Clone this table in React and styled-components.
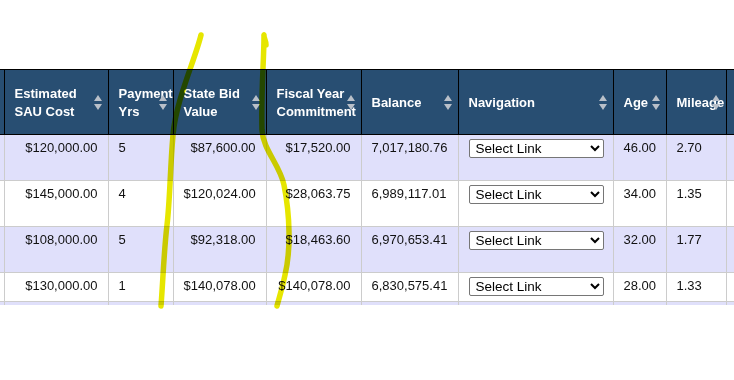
import React from "react";
import styled, { createGlobalStyle } from "styled-components";

const rows = [
  { h: 46, cost: "$120,000.00", yrs: "5", bid: "$87,600.00", fy: "$17,520.00", bal: "7,017,180.76", age: "46.00", mi: "2.70" },
  { h: 46, cost: "$145,000.00", yrs: "4", bid: "$120,024.00", fy: "$28,063.75", bal: "6,989,117.01", age: "34.00", mi: "1.35" },
  { h: 46, cost: "$108,000.00", yrs: "5", bid: "$92,318.00", fy: "$18,463.60", bal: "6,970,653.41", age: "32.00", mi: "1.77" },
  { h: 28, cost: "$130,000.00", yrs: "1", bid: "$140,078.00", fy: "$140,078.00", bal: "6,830,575.41", age: "28.00", mi: "1.33" },
  { h: 46, cost: "", yrs: "", bid: "", fy: "", bal: "", age: "", mi: "" },
];

const columns = [
  { w: 4, label: null },
  { w: 104, label: ["Estimated", "SAU Cost"] },
  { w: 65, label: ["Payment", "Yrs"] },
  { w: 93, label: ["State Bid", "Value"] },
  { w: 95, label: ["Fiscal Year", "Commitment"] },
  { w: 97, label: ["Balance"] },
  { w: 155, label: ["Navigation"] },
  { w: 53, label: ["Age"] },
  { w: 60, label: ["Mileage"] },
  { w: 90, label: [""] },
];

function SortIcon() {
  return (
    <Sort viewBox="0 0 8 15" aria-hidden="true">
      <path d="M4 0 L8 6 L0 6 Z" />
      <path d="M0 9 L8 9 L4 15 Z" />
    </Sort>
  );
}

function LinkSelect() {
  return (
    <Select defaultValue="">
      <option value="">Select Link</option>
      <option value="map">Map</option>
      <option value="detail">Detail</option>
    </Select>
  );
}

function App() {
  return (
    <>
      <GlobalStyle />
      <Page>
        <Viewport>
          <Table>
            <colgroup>
              {columns.map((c, i) => (
                <col key={i} style={{ width: c.w }} />
              ))}
            </colgroup>
            <thead>
              <tr>
                {columns.map((c, i) => (
                  <Th key={i} $edge={i === 0}>
                    {c.label &&
                      c.label.map((line, j) => (
                        <React.Fragment key={j}>
                          {j > 0 && <br />}
                          {line}
                        </React.Fragment>
                      ))}
                    {c.label && c.label[0] !== "" && <SortIcon />}
                  </Th>
                ))}
              </tr>
            </thead>
            <tbody>
              {rows.map((r, i) => (
                <Row key={i} $odd={i % 2 === 0} $h={r.h}>
                  <Td $edge />
                  <Td $align="right">{r.cost}</Td>
                  <Td>{r.yrs}</Td>
                  <Td $align="right">{r.bid}</Td>
                  <Td $align="right">{r.fy}</Td>
                  <Td>{r.bal}</Td>
                  <Td>
                    <LinkSelect />
                  </Td>
                  <Td>{r.age}</Td>
                  <Td>{r.mi}</Td>
                  <Td />
                </Row>
              ))}
            </tbody>
          </Table>
        </Viewport>
        <Marker viewBox="0 0 734 380" aria-hidden="true">
          <path d="M201 35 C195 60, 176 100, 173 135 S170 200, 167 225 S163 280, 161 306" />
          <path d="M266 45 C266 40, 263 36, 264 35 C264 60, 261 90, 262 130 C263 150, 280 165, 284 185 C290 215, 291 250, 285 275 C282 290, 279 298, 277 306" />
        </Marker>
      </Page>
    </>
  );
}

//============================== Styles ======================================//

const GlobalStyle = createGlobalStyle`
  html, body {
    margin: 0;
    padding: 0;
    background: #ffffff;
  }
  body {
    font-family: "Liberation Sans", Arial, sans-serif;
  }
`;

const Page = styled.div`
  position: relative;
  width: 734px;
  height: 380px;
  padding-top: 69px;
  box-sizing: border-box;
  background: #ffffff;
`;

const Viewport = styled.div`
  width: 734px;
  height: 236px;
  overflow: hidden;
`;

const Table = styled.table`
  table-layout: fixed;
  border-collapse: collapse;
  width: 816px;
  font-family: "Liberation Sans", Arial, sans-serif;
  font-size: 13px;
  color: #111111;
`;

const Th = styled.th`
  position: relative;
  height: 62px;
  padding: 2px 18px 0 10px;
  background: #284e72;
  color: #ffffff;
  font-weight: bold;
  font-size: 13px;
  line-height: 18px;
  text-align: left;
  vertical-align: middle;
  white-space: nowrap;
  border: 1px solid #000000;
  border-left: ${(p) => (p.$edge ? "none" : "1px solid #000000")};
  overflow: visible;
`;

const Sort = styled.svg`
  position: absolute;
  right: 6px;
  top: 50%;
  width: 8px;
  height: 15px;
  margin-top: -7px;
  fill: #b9c0c9;
`;

const Row = styled.tr`
  height: ${(p) => p.$h}px;
  background: ${(p) => (p.$odd ? "#e0e0fb" : "#ffffff")};
`;

const Td = styled.td`
  padding: 5px 10px;
  line-height: 16px;
  vertical-align: top;
  text-align: ${(p) => p.$align || "left"};
  white-space: nowrap;
  border: 1px solid #cccccc;
  border-left: ${(p) => (p.$edge ? "none" : "1px solid #cccccc")};
`;

const Select = styled.select`
  display: block;
  width: 135px;
  height: 19px;
  margin: -1px 0 0;
  padding: 0 2px;
  font-family: "Liberation Sans", Arial, sans-serif;
  font-size: 13.5px;
  color: #000000;
  background: #ffffff;
  border: 1px solid #767676;
  border-radius: 2px;
`;

const Marker = styled.svg`
  position: absolute;
  left: 0;
  top: 0;
  width: 734px;
  height: 380px;
  pointer-events: none;
  mix-blend-mode: multiply;
  fill: none;
  stroke: #e6e600;
  stroke-width: 5.5;
  stroke-linecap: round;
  stroke-linejoin: round;
`;

export default App;
